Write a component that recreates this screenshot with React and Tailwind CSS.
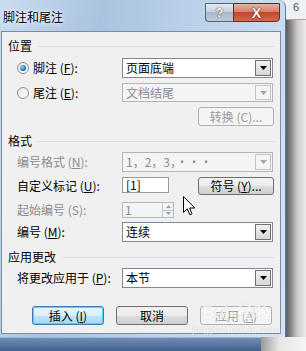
import React from 'react';

const font = { fontFamily: '"Noto Sans CJK SC", "Noto Sans", sans-serif' };

const Arrow = ({ color = '#000' }) => (
  <svg width="7" height="4" viewBox="0 0 7 4"><path d="M0 0h7L3.5 4z" fill={color} /></svg>
);

const Combo = ({ value, disabled }) => (
  <div
    className={
      disabled
        ? 'flex h-full w-[151px] items-center border border-[#b5b5b5] bg-[#f4f4f4] text-[#8d8d8d]'
        : 'flex h-full w-[151px] items-center border border-[#828790] bg-white text-black'
    }
  >
    <span className="flex-1 whitespace-nowrap pl-[3px] leading-none">{value}</span>
    <div
      className={
        disabled
          ? 'mr-px flex h-[calc(100%-2px)] w-[16px] items-center justify-center border border-[#c4c4c4] bg-[#f4f4f4]'
          : 'mr-px flex h-[calc(100%-2px)] w-[16px] items-center justify-center border border-[#707070] bg-gradient-to-b from-[#f2f2f2] to-[#d6d6d6]'
      }
    >
      <Arrow color={disabled ? '#a8a8a8' : '#000'} />
    </div>
  </div>
);

const Btn = ({ children, w = 'w-[76px]', kind = 'normal' }) => {
  const cls = {
    normal:
      'border-[#707070] bg-[linear-gradient(#f2f2f2_0%,#ebebeb_50%,#dddddd_50%,#cfcfcf_100%)] text-black',
    default:
      'border-[#3c7fb1] bg-[linear-gradient(#eaf6fd_0%,#d9f0fc_50%,#bee6fd_50%,#a7d9f5_100%)] text-black shadow-[inset_0_0_0_1px_#48d5f8]',
    disabled: 'border-[#adb2b5] bg-[#f4f4f4] text-[#9a9a9a]',
  }[kind];
  return (
    <div className={`flex h-full ${w} items-center justify-center rounded-[3px] border ${cls}`}>
      <span className="whitespace-nowrap leading-none">{children}</span>
    </div>
  );
};

const Header = ({ text, lineLeft }) => (
  <div className="flex h-[14px] items-center">
    <span className="pl-[6px] leading-none text-black">{text}</span>
    <div className={`ml-auto mr-[6px] h-px bg-[#d5dfe5] ${lineLeft}`} />
  </div>
);

const Label = ({ children, gray }) => (
  <span
    className={
      gray
        ? 'w-[120px] shrink-0 whitespace-nowrap pl-[15px] leading-none text-[#8d8d8d]'
        : 'w-[120px] shrink-0 whitespace-nowrap pl-[15px] leading-none text-black'
    }
  >
    {children}
  </span>
);

const Radio = ({ checked }) => (
  <div className="flex h-[12px] w-[12px] items-center justify-center rounded-full border border-[#8e8f8f] bg-gradient-to-br from-[#e6e6e6] to-[#ffffff]">
    {checked && <div className="h-[6px] w-[6px] rounded-full bg-[radial-gradient(circle_at_35%_35%,#8fe0ff,#1b6fb8_60%,#0c3f7a)]" />}
  </div>
);

const U = ({ c }) => <span className="underline underline-offset-1">{c}</span>;

export default function App() {
  return (
    <div className="flex h-[351px] w-[306px] flex-col overflow-hidden bg-[#f3f4f6] text-[12px]" style={font}>
      <div className="flex h-[337px]">
        {/* window */}
        <div className="relative flex w-[286px] flex-col rounded-tr-[7px] border-r border-[#5f7a9a] bg-[linear-gradient(100deg,#c9dcef_0%,#a9c3df_30%,#b9d0e8_55%,#d4e3f2_100%)]">
          <div className="flex h-[31px] items-start">
            <span className="mt-[11px] pl-[3px] leading-none text-black [text-shadow:0_0_6px_#fff,0_0_3px_#fff]">脚注和尾注</span>
            <div className="ml-auto mr-[5px] mt-[3px] flex h-[19px]">
              <div className="flex w-[28px] items-center justify-center rounded-bl-[4px] border border-r-0 border-[#56657a] bg-[linear-gradient(#e2e9f1_0%,#c5d1de_45%,#a9b8c9_50%,#bccad8_100%)]">
                <span className="text-[13px] font-bold leading-none text-white [text-shadow:0_0_1px_#333,0_0_1px_#333]" style={{ fontFamily: '"Liberation Sans", sans-serif' }}>?</span>
              </div>
              <div className="flex w-[47px] items-center justify-center rounded-br-[4px] border border-[#6b2a22] bg-[linear-gradient(#eab0a4_0%,#d9806c_45%,#c4462f_50%,#d2684f_100%)]">
                <span className="text-[14px] font-bold leading-none text-white [text-shadow:0_0_1px_#3a0d08,0_0_1px_#3a0d08]" style={{ fontFamily: '"Liberation Sans", sans-serif' }}>X</span>
              </div>
            </div>
          </div>
          {/* client */}
          <div className="ml-px mr-[4px] flex h-[303px] flex-col border border-[#7b8ca2] bg-[#f0f0f0] pt-px">
            <div className="mt-[6px]"><Header text="位置" lineLeft="w-[236px]" /></div>
            <div className="mt-[5px] flex h-[20px] items-center">
              <div className="ml-[15px] mr-[4px]"><Radio checked /></div>
              <span className="w-[89px] whitespace-nowrap leading-none text-black">脚注 (<U c="F" />):</span>
              <Combo value="页面底端" />
            </div>
            <div className="mt-[5px] flex h-[19px] items-center">
              <div className="ml-[15px] mr-[4px]"><Radio /></div>
              <span className="w-[89px] whitespace-nowrap leading-none text-black">尾注 (<U c="E" />):</span>
              <Combo value="文档结尾" disabled />
            </div>
            <div className="mt-[5px] flex h-[19px] justify-end pr-[6px]">
              <Btn kind="disabled">转换 (C)...</Btn>
            </div>
            <div className="mt-[8px]"><Header text="格式" lineLeft="w-[236px]" /></div>
            <div className="mt-[4px] flex h-[20px] items-center">
              <Label gray>编号格式 (<U c="N" />):</Label>
              <Combo value="1，2，3，···" disabled />
            </div>
            <div className="mt-[5px] flex h-[18px] items-center">
              <Label>自定义标记 (<U c="U" />):</Label>
              <div className="flex h-[16px] w-[47px] items-center self-start border border-[#9a9a9a] bg-white pl-[3px] leading-none">[1]</div>
              <div className="ml-auto mr-[6px] h-full"><Btn>符号 (<U c="Y" />)...</Btn></div>
            </div>
            <div className="mt-[7px] flex h-[16px] items-center">
              <Label gray>起始编号 (S):</Label>
              <div className="flex h-full w-[52px] border border-[#a8bdd4] bg-[#f4f4f4]">
                <span className="flex-1 pl-[2px] leading-[14px] text-[#8d8d8d]">1</span>
                <div className="flex w-[11px] flex-col border-l border-[#c4c4c4]">
                  <div className="flex flex-1 items-center justify-center border-b border-[#c4c4c4]">
                    <svg width="5" height="3"><path d="M2.5 0L5 3H0z" fill="#a0a0a0" /></svg>
                  </div>
                  <div className="flex flex-1 items-center justify-center">
                    <svg width="5" height="3"><path d="M0 0h5L2.5 3z" fill="#a0a0a0" /></svg>
                  </div>
                </div>
              </div>
            </div>
            <div className="mt-[4px] flex h-[20px] items-center">
              <Label>编号 (<U c="M" />):</Label>
              <Combo value="连续" />
            </div>
            <div className="mt-[8px]"><Header text="应用更改" lineLeft="w-[211px]" /></div>
            <div className="mt-[4px] flex h-[20px] items-center">
              <Label>将更改应用于 (<U c="P" />):</Label>
              <Combo value="本节" />
            </div>
            <div className="mt-[18px] flex h-[19px] items-center gap-[12px] pl-[30px]">
              <Btn w="w-[72px]" kind="default">插入 (<U c="I" />)</Btn>
              <Btn w="w-[72px]">取消</Btn>
              <Btn w="w-[72px]" kind="disabled">应用 (<U c="A" />)</Btn>
            </div>
          </div>

          {/* watermark */}
          <div className="pointer-events-none absolute left-[192px] top-[304px] flex flex-col items-center leading-none opacity-60">
            <span className="text-[17px] font-bold text-white [text-shadow:0_0_1px_#bbb]" style={{ fontFamily: '"Liberation Sans", sans-serif' }}>
              Bai<span className="text-[13px]">●</span>经验
            </span>
            <span className="mt-[3px] text-[11px] text-white [text-shadow:0_0_1px_#999]" style={{ fontFamily: '"Liberation Sans", sans-serif' }}>jingyan.baidu.com</span>
          </div>

          {/* mouse pointer */}
          <svg className="absolute left-[183px] top-[196px]" width="13" height="20" viewBox="0 0 13 20">
            <path d="M0.5 0.5V16.5L4.3 12.8L6.8 18.7L9 17.8L6.6 12H11.8Z" fill="#fff" stroke="#000" strokeWidth="1" strokeLinejoin="round" />
          </svg>
        </div>

        {/* right side background */}
        <div className="flex flex-1 flex-col">
          <div className="flex h-[20px] items-start border-b border-[#8fb0d6] bg-[#eef1f5] pl-[7px] pt-[2px]">
            <span className="text-[11px] leading-none text-[#555]" style={{ fontFamily: '"Liberation Sans", sans-serif' }}>6</span>
          </div>
          <div className="flex-1 bg-[linear-gradient(90deg,#5c5c5c_0%,#8a8a8a_25%,#c9c9c9_55%,#ececec_100%)]" />
        </div>
      </div>
      <div className="flex h-[14px]">
        <div className="w-[261px] border-t border-[#9ab5d6] bg-[linear-gradient(#6f8db5,#41618c)]" />
        <div className="flex-1 bg-[linear-gradient(90deg,#9a9a9a,#e6e6e6_40%,#f5f5f5)]" />
      </div>
    </div>
  );
}
